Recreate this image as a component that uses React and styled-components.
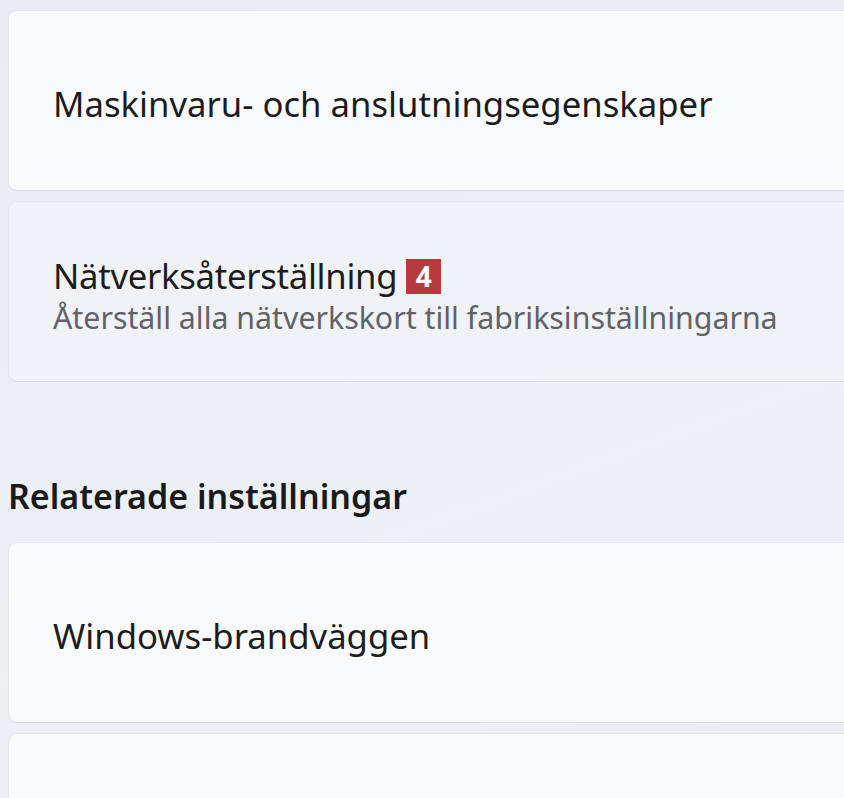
import React from 'react';
import styled, { createGlobalStyle } from 'styled-components';

const GlobalStyle = createGlobalStyle`
  html, body {
    margin: 0;
    padding: 0;
    background: #e9edf3;
    overflow: hidden;
  }
  body {
    font-family: "Noto Sans", "Open Sans", sans-serif;
    color: #1b1b1b;
  }
`;

const settings = [
  { title: 'Maskinvaru- och anslutningsegenskaper' },
  {
    title: 'Nätverksåterställning',
    subtitle: 'Återställ alla nätverkskort till fabriksinställningarna',
    badge: '4',
    active: true,
  },
];

const related = [
  { title: 'Windows-brandväggen' },
  { title: '' },
];

const App = () => {
  return (
    <>
      <GlobalStyle />
      <Page>
        <CardList>
          {settings.map((item, index) => (
            <Card key={index} $active={item.active}>
              <TextBlock>
                <TitleRow>
                  <Title $tight={!!item.badge}>{item.title}</Title>
                  {item.badge && <Badge>{item.badge}</Badge>}
                </TitleRow>
                {item.subtitle && <Subtitle>{item.subtitle}</Subtitle>}
              </TextBlock>
            </Card>
          ))}
        </CardList>

        <SectionHeading>Relaterade inställningar</SectionHeading>

        <CardList>
          {related.map((item, index) => (
            <Card key={index}>
              <TextBlock>
                <TitleRow>
                  <Title>{item.title}</Title>
                </TitleRow>
              </TextBlock>
            </Card>
          ))}
        </CardList>
      </Page>
    </>
  );
};

export default App;

// -------------------- CSS -------------------- //

const Page = styled.div`
  display: flex;
  flex-direction: column;
  padding: 10px 0 0 8px;
  width: 880px;
  min-height: 798px;
  background: linear-gradient(160deg, #e8ecf2 0%, #edf0f5 55%, #e8ecf2 100%);
`;

const CardList = styled.div`
  display: flex;
  flex-direction: column;
  gap: 10px;
`;

const Card = styled.div`
  display: flex;
  align-items: center;
  height: 181px;
  box-sizing: border-box;
  padding: 7px 0 0 44px;
  background: ${({ $active }) => ($active ? '#f0f2f6' : '#f9fafb')};
  border: 1px solid #e3e6ea;
  border-bottom-color: #d9dce0;
  border-radius: 9px;
`;

const TextBlock = styled.div`
  display: flex;
  flex-direction: column;
`;

const TitleRow = styled.div`
  display: flex;
  align-items: center;
  gap: 9px;
`;

const Title = styled.span`
  font-size: 34.7px;
  line-height: 44px;
  color: #1c1c1c;
  letter-spacing: ${({ $tight }) => ($tight ? '-0.3px' : '0')};
`;

const Badge = styled.span`
  display: flex;
  align-items: center;
  justify-content: center;
  width: 35px;
  height: 35px;
  background: #b83a3d;
  color: #fff;
  font-weight: 700;
  font-size: 28px;
`;

const Subtitle = styled.span`
  margin-top: 2px;
  font-size: 30.3px;
  line-height: 36px;
  color: #606266;
`;

const SectionHeading = styled.h2`
  margin: 92px 0 24px 0;
  font-size: 34px;
  font-weight: 600;
  line-height: 44px;
  color: #1a1a1a;
`;
